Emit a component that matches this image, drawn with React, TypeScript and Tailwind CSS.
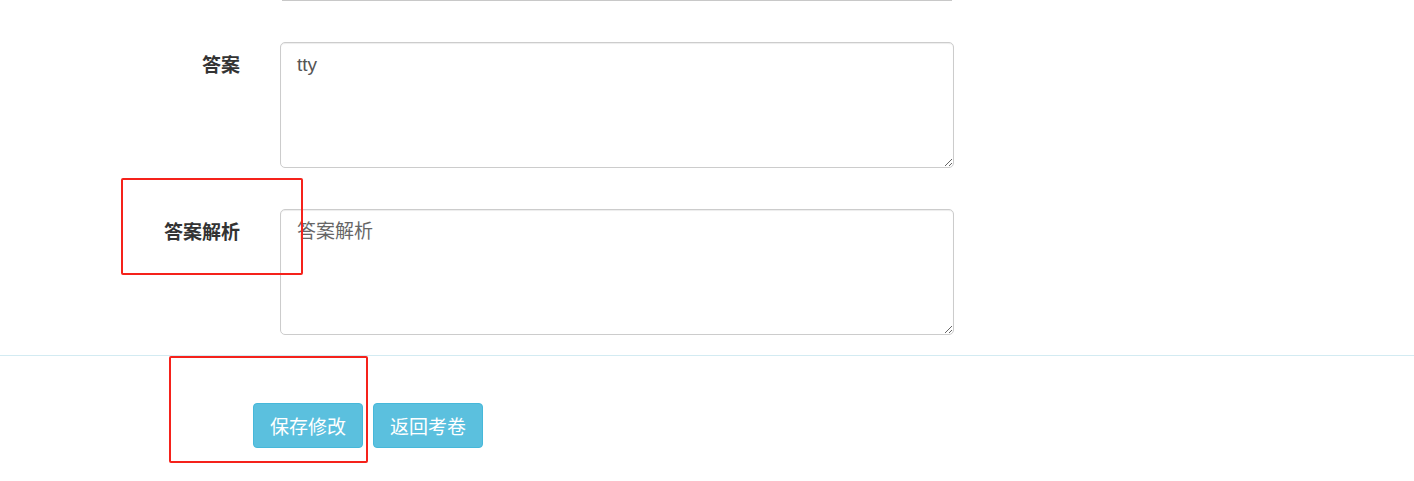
const font = "font-['Microsoft_YaHei','Noto_Sans_CJK_SC',sans-serif]"

const fields = [
  { label: '答案', value: 'tty', placeholder: '答案' },
  { label: '答案解析', value: '', placeholder: '答案解析' },
]

export default function App() {
  return (
    <div className={`relative h-[481px] w-full overflow-hidden bg-white ${font}`}>
      {/* bottom edge of the field above */}
      <div className="ml-[282px] h-px w-[670px] bg-[#c8c8c8]" />

      {/* Form rows */}
      <div className="mt-[41px] flex flex-col gap-[41px]">
        {fields.map((f) => (
          <div key={f.label} className="flex items-start">
            <label className="w-[240px] pt-[9px] text-right text-[19px] font-bold leading-[26px] text-[#333]">
              {f.label}
            </label>
            <textarea
              defaultValue={f.value}
              placeholder={f.placeholder}
              className="ml-[40px] h-[126px] w-[674px] rounded-[5px] border border-[#ccc] px-[16px] py-[9px] font-['Liberation_Sans','Noto_Sans_CJK_SC',sans-serif] text-[19px] leading-[26px] text-[#555] shadow-[inset_0_1px_1px_rgba(0,0,0,0.075)] outline-none placeholder:text-[#666]"
            />
          </div>
        ))}
      </div>

      {/* Divider */}
      <div className="mt-[20px] h-px w-full bg-[#d3ebf2]" />

      {/* Actions */}
      <div className="flex gap-[10px] pl-[253px] pt-[47px]">
        <button className="h-[45px] w-[110px] rounded-[4px] border border-[#46b8da] bg-[#5bc0de] text-[19px] leading-[26px] text-white">
          保存修改
        </button>
        <button className="h-[45px] w-[110px] rounded-[4px] border border-[#46b8da] bg-[#5bc0de] text-[19px] leading-[26px] text-white">
          返回考卷
        </button>
      </div>

      {/* Annotation boxes */}
      <div className="pointer-events-none absolute left-[121px] top-[178px] h-[97px] w-[182px] rounded-[2px] border-2 border-[#f5221b]" />
      <div className="pointer-events-none absolute left-[169px] top-[356px] h-[107px] w-[199px] rounded-[2px] border-2 border-[#f5221b]" />
    </div>
  )
}
